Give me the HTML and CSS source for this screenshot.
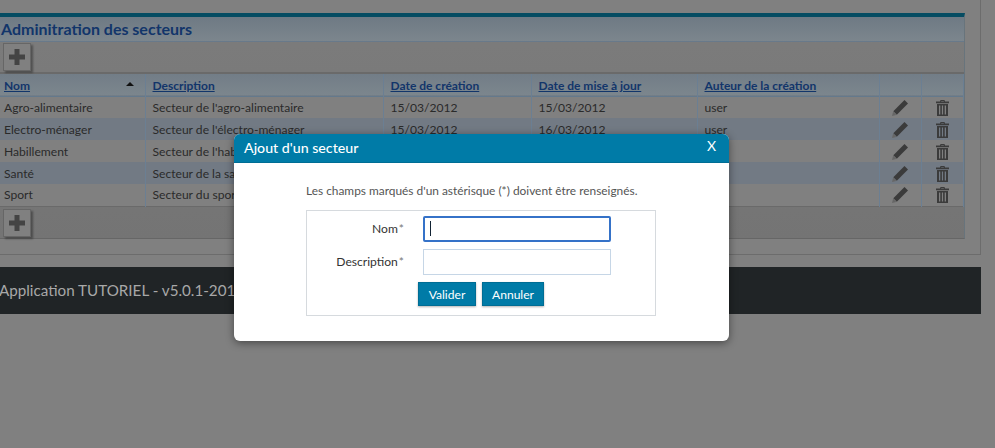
FILE: index.html
```html
<!DOCTYPE html>
<html lang="fr">
<head>
  <meta charset="UTF-8" />
  <title>Administration des secteurs</title>
  <link rel="stylesheet" href="styles.css">
</head>
<body>
  <svg class="icon-defs" width="0" height="0">
    <symbol id="i-plus" viewBox="0 0 16 16"><path d="M5.500 0h5v5.500H16v5h-5.500V16h-5v-5.500H0v-5h5.500z"/></symbol>
    <symbol id="i-pencil" viewBox="0 0 16 16"><path d="M12.500 0L16 3.500 4.800 14.700 1.300 11.200z"/><path class="tip" d="M1.100 11.600l3.300 3.300L0 16z"/></symbol>
    <symbol id="i-trash" viewBox="0 0 13 16"><path d="M4.500 0h4l.5 1.500h4v1.800H0V1.500h4zM5.300.9l-.2.600h2.800l-.2-.6zM1 4h11v12H1zm2 1.500v9h1.300v-9zm2.900 0v9h1.200v-9zm2.800 0v9H10v-9z" fill-rule="evenodd"/></symbol>
  </svg>

  <div class="page">
    <div class="content">
      <section class="panel">
        <h1 class="panel-title">Adminitration des secteurs</h1>
        <div class="toolbar">
          <button class="add-btn" type="button"><svg><use href="#i-plus"/></svg></button>
        </div>
        <table class="grid">
          <colgroup>
            <col class="c-nom"><col class="c-desc"><col class="c-date"><col class="c-date2"><col class="c-auteur"><col class="c-act"><col class="c-act">
          </colgroup>
          <thead>
            <tr>
              <th><a href="#">Nom</a><span class="sort-arrow"></span></th>
              <th><a href="#">Description</a></th>
              <th><a href="#">Date de création</a></th>
              <th><a href="#">Date de mise à jour</a></th>
              <th><a href="#">Auteur de la création</a></th>
              <th></th>
              <th></th>
            </tr>
          </thead>
          <tbody>
            <tr>
              <td>Agro-alimentaire</td><td>Secteur de l'agro-alimentaire</td><td>15/03/2012</td><td>15/03/2012</td><td>user</td>
              <td class="act"><svg class="pencil"><use href="#i-pencil"/></svg></td><td class="act"><svg class="trash"><use href="#i-trash"/></svg></td>
            </tr>
            <tr>
              <td>Electro-ménager</td><td>Secteur de l'électro-ménager</td><td>15/03/2012</td><td>16/03/2012</td><td>user</td>
              <td class="act"><svg class="pencil"><use href="#i-pencil"/></svg></td><td class="act"><svg class="trash"><use href="#i-trash"/></svg></td>
            </tr>
            <tr>
              <td>Habillement</td><td>Secteur de l'habillement</td><td>15/03/2012</td><td>15/03/2012</td><td>user</td>
              <td class="act"><svg class="pencil"><use href="#i-pencil"/></svg></td><td class="act"><svg class="trash"><use href="#i-trash"/></svg></td>
            </tr>
            <tr>
              <td>Santé</td><td>Secteur de la santé</td><td>15/03/2012</td><td>15/03/2012</td><td>user</td>
              <td class="act"><svg class="pencil"><use href="#i-pencil"/></svg></td><td class="act"><svg class="trash"><use href="#i-trash"/></svg></td>
            </tr>
            <tr>
              <td>Sport</td><td>Secteur du sport</td><td>15/03/2012</td><td>15/03/2012</td><td>user</td>
              <td class="act"><svg class="pencil"><use href="#i-pencil"/></svg></td><td class="act"><svg class="trash"><use href="#i-trash"/></svg></td>
            </tr>
          </tbody>
        </table>
        <div class="toolbar toolbar-bottom">
          <button class="add-btn" type="button"><svg><use href="#i-plus"/></svg></button>
        </div>
      </section>
    </div>
    <footer class="footer"><span>Application TUTORIEL - v5.0.1-2012</span></footer>
  </div>

  <div class="modal">
    <div class="modal-head">
      <span>Ajout d'un secteur</span>
      <span class="modal-close">X</span>
    </div>
    <div class="modal-body">
      <p class="modal-note">Les champs marqués d'un astérisque (*) doivent être renseignés.</p>
      <form class="modal-form">
        <div class="form-row">
          <label for="nom">Nom<i>*</i></label>
          <div class="field">
            <input type="text" id="nom" class="is-focus">
            <span class="caret"></span>
          </div>
        </div>
        <div class="form-row">
          <label for="description">Description<i>*</i></label>
          <div class="field"><input type="text" id="description"></div>
        </div>
        <div class="form-actions">
          <button class="btn btn-ok" type="button">Valider</button>
          <button class="btn btn-cancel" type="button">Annuler</button>
        </div>
      </form>
    </div>
  </div>
</body>
</html>
```

FILE: styles.css
```css
* {
  box-sizing: border-box;
}

html,
body {
  height: 448px;
  overflow: hidden;
}

body {
  margin: 0;
  background-color: #808080;
  font-family: Lato, 'Liberation Sans', sans-serif;
  font-size: 12.1px;
  color: #2a2a2a;
}

.icon-defs {
  position: absolute;
}

.page {
  width: 981px;
}

.content {
  height: 255px;
  padding: 13px 15px 0 0;
  border-right: 1px solid #6c6c6c;
  border-bottom: 1px solid #6c6c6c;
}

.panel {
  height: 226px;
  border-top: 4px solid #054c62;
  border-right: 1px solid #68747c;
  border-bottom: 1px solid #666;
  background: linear-gradient(#7c7c7c, #747474);
}

.panel-title {
  height: 25px;
  margin: 0;
  padding: 1px 0 0 1px;
  border-bottom: 1px solid #68798a;
  background: linear-gradient(#6e7a84, #7c868d);
  font-size: 16px;
  font-weight: 700;
  line-height: 21px;
  color: #12356a;
}

.toolbar {
  height: 32px;
  padding: 1px 0 0 3px;
  border-bottom: 2px solid #6a6a6a;
}

.toolbar-bottom {
  height: 30px;
  padding-top: 2px;
  border-bottom: 0;
}

.add-btn {
  display: block;
  width: 28px;
  height: 28px;
  padding: 5px;
  border: 1px solid #666;
  background-color: #808080;
  box-shadow: 2px 2px 2px rgba(0, 0, 0, 0.35);
}

.add-btn svg {
  display: block;
  width: 16px;
  height: 16px;
  fill: #444;
}

.grid {
  width: 963px;
  table-layout: fixed;
  border-collapse: collapse;
  border-bottom: 1px solid #6a6a6a;
  background-color: #808080;
}

.c-nom { width: 145px; }
.c-desc { width: 238px; }
.c-date { width: 148px; }
.c-date2 { width: 166px; }
.c-auteur { width: 182px; }
.c-act { width: 42px; }

.grid th,
.grid td {
  height: 22px;
  padding: 0 4px;
  border-left: 1px solid #6b7f93;
  text-align: left;
  white-space: nowrap;
  overflow: hidden;
}

.grid th:first-child,
.grid td:first-child {
  border-left: 0;
}

.grid th:nth-child(n+2),
.grid td:nth-child(n+2) {
  padding-left: 7px;
}

.grid tr > :last-child {
  border-right: 1px solid #6b7f93;
}

.grid thead tr {
  background: linear-gradient(#727d87, #7c868d);
  border-bottom: 1px solid #64798c;
}

.grid th {
  padding-top: 2px;
}

.grid th a {
  font-size: 12px;
  font-weight: 700;
  color: #12356a;
}

.sort-arrow {
  float: right;
  margin: 4px 7px 0 0;
  border-left: 4px solid transparent;
  border-right: 4px solid transparent;
  border-bottom: 4px solid #111;
}

.grid tbody tr:nth-child(even) {
  background-color: #727a84;
}

.grid td.act {
  padding: 1px 0 0;
}

.act svg {
  display: block;
  margin: 0 auto;
  fill: #3b3b3b;
}

.pencil {
  width: 16px;
  height: 16px;
}

.tip {
  fill: #666;
}

.trash {
  width: 13px;
  height: 16px;
}

.footer {
  height: 47px;
  margin-top: 12px;
  background-color: #202426;
  font-size: 15.2px;
  line-height: 46px;
  color: #a8a8a8;
  white-space: nowrap;
  overflow: hidden;
}

.footer span {
  margin-left: -1px;
}

.modal {
  position: absolute;
  top: 134px;
  left: 234px;
  width: 495px;
  height: 207px;
  border-radius: 6px;
  background-color: #fff;
  box-shadow: 0 2px 8px rgba(0, 0, 0, 0.45);
  overflow: hidden;
}

.modal-head {
  display: flex;
  justify-content: space-between;
  height: 29px;
  padding: 0 13px 0 10px;
  border-bottom: 1px solid #006d94;
  background-color: #007ba7;
  font-size: 14.2px;
  font-weight: 500;
  line-height: 28px;
  color: #fff;
}

.modal-close {
  font-weight: 400;
  font-size: 14px;
  line-height: 24px;
}

.modal-body {
  padding-left: 72px;
}

.modal-note {
  margin: 0;
  padding-top: 20px;
  font-size: 11.9px;
  line-height: 15px;
  color: #555;
}

.modal-form {
  width: 350px;
  height: 106px;
  margin-top: 12px;
  padding-top: 5px;
  border: 1px solid #d6dade;
}

.form-row {
  display: flex;
  align-items: center;
  height: 26px;
  margin-bottom: 7px;
}

.form-row label {
  width: 97px;
  padding-bottom: 1px;
  text-align: right;
  color: #333;
}

.form-row label i {
  margin-left: 1px;
  font-style: normal;
  color: #777;
}

.field {
  position: relative;
  margin-left: 19px;
}

.field input {
  display: block;
  width: 188px;
  height: 26px;
  padding: 0 6px;
  border: 1px solid #c6d6e6;
  outline: none;
}

.field input.is-focus {
  border: 2px solid #3572c8;
  border-radius: 2px;
}

.caret {
  position: absolute;
  top: 5px;
  left: 7px;
  width: 1px;
  height: 15px;
  background-color: #123;
}

.form-actions {
  display: flex;
  gap: 6px;
  margin-top: 3px;
  padding-left: 111px;
}

.btn {
  height: 24px;
  padding: 0;
  border: 1px solid #006d94;
  background-color: #007ba7;
  box-shadow: 0 1px 2px rgba(0, 0, 0, 0.3);
  font-family: inherit;
  font-size: 12.1px;
  color: #fff;
}

.btn-ok {
  width: 58px;
}

.btn-cancel {
  width: 62px;
}
```
